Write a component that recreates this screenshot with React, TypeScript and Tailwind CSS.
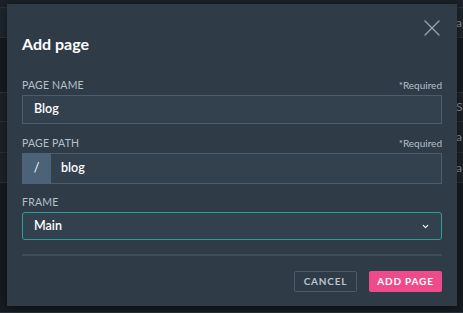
import { X, ChevronDown } from 'lucide-react'

const rows = [
  { h: 'h-[8px]', bg: 'bg-[#1a2128]', text: '' },
  { h: 'h-[30px]', bg: 'bg-[#1e262e]', text: 'a' },
  { h: 'h-[55px]', bg: 'bg-[#161c22]', text: '' },
  { h: 'h-[29px]', bg: 'bg-[#1c232a]', text: 'S' },
  { h: 'h-[31px]', bg: 'bg-[#1c232a]', text: 'a' },
  { h: 'h-[30px]', bg: 'bg-[#1c232a]', text: 'a' },
  { h: 'h-[130px]', bg: 'bg-[#161c22]', text: '' },
]

function Label({ text, required }: { text: string; required?: boolean }) {
  return (
    <div className="flex items-center justify-between h-[12px] mb-[4px] leading-none">
      <span className="text-[10.5px] text-[#b6c0ca] tracking-[0.2px]">{text}</span>
      {required && <span className="text-[10px] text-[#b6c0ca]">*Required</span>}
    </div>
  )
}

export default function App() {
  return (
    <div
      className="relative w-[463px] h-[313px] overflow-hidden bg-[#161c22]"
      style={{ fontFamily: 'Lato, "Open Sans", sans-serif' }}
    >
      {/* table behind the dialog */}
      <div className="flex flex-col">
        {rows.map((r, i) => (
          <div
            key={i}
            className={`${r.h} ${r.bg} flex items-center justify-end border-b border-[#2a333c]`}
          >
            {r.text && (
              <span className="text-[12px] leading-none text-[#8a949e] w-[6px] mr-[1px]">{r.text}</span>
            )}
          </div>
        ))}
      </div>

      {/* dialog */}
      <div className="absolute left-[7px] top-[4px] w-[450px] h-[302px] bg-[#2f3b47] shadow-[0_2px_10px_rgba(0,0,0,0.5)] px-[15px]">
        <X
          className="absolute right-[11px] top-[10px] w-[28px] h-[28px] text-[#9aa6b2]"
          strokeWidth={1.1}
        />
        <h2 className="pt-[32px] text-[16px] font-bold text-white leading-[16px]">Add page</h2>

        <div className="mt-[27px]">
          <Label text="PAGE NAME" required />
          <div className="h-[29px] border border-[#4b5c6d] bg-[#33414e] flex items-center px-[11px]">
            <span className="text-[12.5px] font-semibold text-white">Blog</span>
          </div>
        </div>

        <div className="mt-[13px]">
          <Label text="PAGE PATH" required />
          <div className="h-[31px] border border-[#4b5c6d] bg-[#33414e] flex items-stretch">
            <div className="w-[29px] bg-[#4b6279] flex items-center justify-center -my-px -ml-px">
              <span className="text-[12.5px] text-white">/</span>
            </div>
            <span className="text-[12.5px] font-semibold text-white flex items-center pl-[10px]">blog</span>
          </div>
        </div>

        <div className="mt-[12px]">
          <Label text="FRAME" />
          <div className="h-[28px] border border-[#2f9d95] rounded-[3px] bg-[#33414e] flex items-center justify-between px-[11px]">
            <span className="text-[12.5px] font-semibold text-white">Main</span>
            <ChevronDown className="w-[9px] h-[9px] text-white" strokeWidth={3} />
          </div>
        </div>

        <div className="mt-[14px] h-[2px] bg-[#3e4d5b]" />

        <div className="flex justify-end gap-[12px] mt-[15px]">
          <button className="h-[21px] w-[63px] border border-[#4a5b6c] rounded-[2px] text-[10px] font-bold tracking-[0.8px] text-[#b9c4ce]">
            CANCEL
          </button>
          <button className="h-[21px] w-[73px] bg-[#ef4b8a] rounded-[2px] text-[10px] font-bold tracking-[0.8px] text-white">
            ADD PAGE
          </button>
        </div>
      </div>
    </div>
  )
}
